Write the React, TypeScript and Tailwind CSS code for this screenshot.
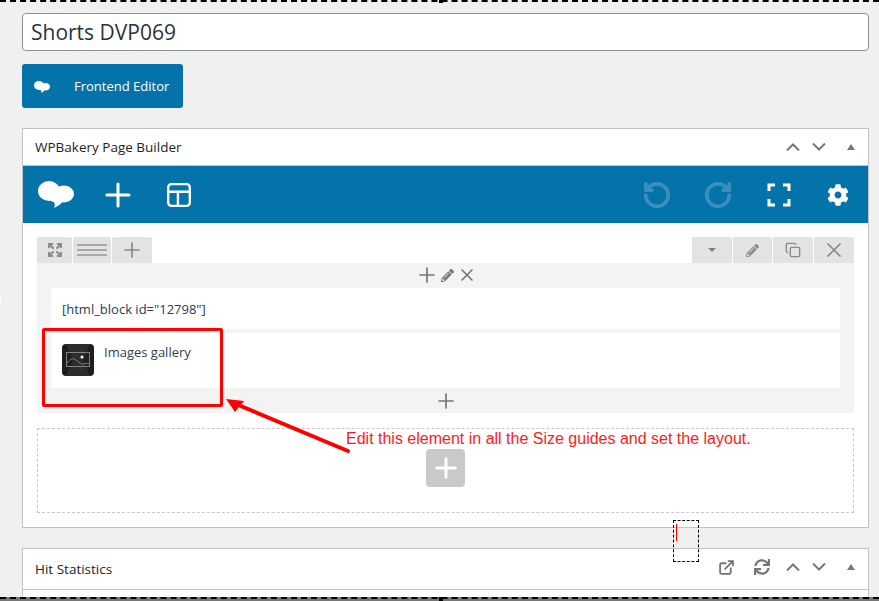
import { Plus, X, Copy, RotateCcw, RotateCw, ExternalLink, Expand } from "lucide-react";
import { FaCog, FaPencilAlt, FaSync } from "react-icons/fa";

const font = "font-['Open_Sans','Noto_Sans',sans-serif]";

function Cloud({ className }: { className: string }) {
  return (
    <svg viewBox="0 0 36 27" className={className} fill="currentColor">
      <ellipse cx="11" cy="10" rx="11" ry="10" />
      <ellipse cx="26" cy="13" rx="10" ry="8.500" />
      <path d="M12 16h14c0 4-3 8-10 11 1-2 1-4 0-6-2 0-4-1-4-5z" />
    </svg>
  );
}

function Arrow() {
  return (
    <svg className="absolute left-[224px] top-[396px] h-[60px] w-[130px]" viewBox="0 0 130 60">
      <line x1="124" y1="55" x2="12" y2="8" stroke="#ff0000" strokeWidth="4" strokeLinecap="round" />
      <polygon points="2,3 20,5 11,16" fill="#ff0000" />
    </svg>
  );
}

function Chevron({ up }: { up?: boolean }) {
  return (
    <svg viewBox="0 0 14 8" className="h-[8px] w-[14px]" fill="none" stroke="#72777c" strokeWidth="2">
      <path d={up ? "M1 7.500 7 1.500l6 6" : "M1 .5l6 6 6-6"} />
    </svg>
  );
}

function PanelControls() {
  return (
    <div className="flex items-center">
      <Chevron up />
      <span className="ml-[12px]">
        <Chevron />
      </span>
      <span className="ml-[21px] mr-[13px] h-0 w-0 border-x-[4px] border-b-[6px] border-x-transparent border-b-[#72777c]" />
    </div>
  );
}

function Tab({ w, children }: { w: string; children: React.ReactNode }) {
  return (
    <div className={`flex h-[26px] items-center justify-center rounded-t-[2px] bg-[#e3e3e3] text-[#8a8a8a] ${w}`}>
      {children}
    </div>
  );
}

export default function App() {
  return (
    <div className={`relative h-[601px] w-[879px] overflow-hidden bg-[#f0f0f0] ${font}`}>
      <div className="pl-[22px] pr-[10px] pt-[13px]">
        <div className="flex h-[38px] items-center rounded-[4px] border border-[#8c8f94] bg-white pl-[8px] pt-[2px] text-[21px] text-[#2c3338]">
          Shorts DVP069
        </div>

        <div className="mt-[13px] flex h-[44px] w-[161px] items-center rounded-[3px] bg-[#0473aa] pt-[1px] text-[13px] text-white">
          <Cloud className="ml-[12px] h-[12px] w-[16px]" />
          <span className="ml-[24px]">Frontend Editor</span>
        </div>

        <div className="mt-[20px] h-[400px] border border-[#c3c4c7] bg-white">
          <div className="flex h-[37px] items-center justify-between border-b border-[#c3c4c7]">
            <span className="pl-[12px] text-[13.500px] font-medium text-[#1d2327]">WPBakery Page Builder</span>
            <PanelControls />
          </div>

          <div className="flex h-[57px] items-center bg-[#0473aa] text-white">
            <Cloud className="ml-[15px] h-[27px] w-[36px]" />
            <Plus className="ml-[25px] h-[38px] w-[38px]" strokeWidth={1.900} />
            <svg className="ml-[29px] h-[26px] w-[26px]" viewBox="0 0 24 24" fill="none" stroke="currentColor" strokeWidth="2.200">
              <rect x="2" y="2" width="20" height="20" rx="3" />
              <path d="M2 9h20M11 9v13" />
            </svg>
            <RotateCcw className="ml-auto h-[30px] w-[30px] text-[#3a8fbb]" strokeWidth={3} />
            <RotateCw className="ml-[31px] h-[30px] w-[30px] text-[#3a8fbb]" strokeWidth={3} />
            <svg className="ml-[34px] h-[24px] w-[24px]" viewBox="0 0 24 24" fill="none" stroke="currentColor" strokeWidth="3">
              <path d="M2 8V2h6M16 2h6v6M22 16v6h-6M8 22H2v-6" />
            </svg>
            <FaCog className="ml-[36px] mr-[19px] h-[22px] w-[22px]" />
          </div>

          <div className="px-[14px] pt-[14px]">
            <div className="flex h-[26px] justify-between">
              <div className="flex gap-px">
                <Tab w="w-[35px]">
                  <Expand className="h-[16px] w-[16px]" strokeWidth={3} />
                </Tab>
                <Tab w="w-[38px]">
                  <div className="flex w-[30px] flex-col gap-[3px]">
                    <div className="h-[2px] bg-[#a8a8a8]" />
                    <div className="h-[2px] bg-[#a8a8a8]" />
                    <div className="h-[2px] bg-[#a8a8a8]" />
                  </div>
                </Tab>
                <Tab w="w-[40px]">
                  <Plus className="h-[24px] w-[24px]" strokeWidth={1.700} />
                </Tab>
              </div>
              <div className="flex gap-px">
                <Tab w="w-[40px]">
                  <span className="h-0 w-0 border-x-[4px] border-t-[4px] border-x-transparent border-t-[#808080]" />
                </Tab>
                <Tab w="w-[39px]">
                  <FaPencilAlt className="h-[13px] w-[13px]" />
                </Tab>
                <Tab w="w-[40px]">
                  <Copy className="h-[16px] w-[16px]" strokeWidth={2} />
                </Tab>
                <Tab w="w-[40px]">
                  <X className="h-[24px] w-[24px]" strokeWidth={1.700} />
                </Tab>
              </div>
            </div>

            <div className="h-[150px] bg-[#f3f3f3] px-[14px]">
              <div className="flex h-[24px] items-center justify-center text-[#777]">
                <Plus className="h-[24px] w-[24px]" strokeWidth={1.700} />
                <FaPencilAlt className="ml-[2px] h-[13px] w-[13px]" />
                <X className="ml-[3px] h-[20px] w-[20px]" strokeWidth={2} />
              </div>
              <div className="mt-px flex h-[41px] items-center bg-white pl-[11px] pt-[3px] text-[13px] text-[#23405a]">
                [html_block id="12798"]
              </div>
              <div className="mt-[4px] flex h-[55px] bg-white pl-[11px] pt-[11px]">
                <svg viewBox="0 0 32 32" className="h-[32px] w-[32px]" fill="none">
                  <rect width="32" height="32" rx="4" fill="#1e1e1e" />
                  <path d="M4 0h24l-7 16 7 16H4l7-16z" fill="#2d2d2d" />
                  <rect x="4.500" y="8.500" width="23" height="14" stroke="#808080" />
                  <path d="M5 19c4-5 6-5 9-3s5 5 8 4 4-1 5 0" stroke="#808080" />
                  <circle cx="20" cy="13" r="1.500" fill="#ffffff" />
                </svg>
                <span className="ml-[10px] text-[13px] leading-[16px] text-[#333f4d]">Images gallery</span>
              </div>
              <div className="flex h-[25px] items-center justify-center text-[#777]">
                <Plus className="h-[24px] w-[24px]" strokeWidth={1.700} />
              </div>
            </div>

            <div className="mt-[15px] flex h-[85px] justify-center border border-dashed border-[#c8c8c8] pt-[20px]">
              <div className="flex h-[38px] w-[39px] items-center justify-center rounded-[4px] bg-[#c9c9c9] text-white">
                <Plus className="h-[32px] w-[32px]" strokeWidth={2.200} />
              </div>
            </div>
          </div>
        </div>

        <div className="mt-[20px] h-[60px] border border-[#c3c4c7] bg-white">
          <div className="flex h-[41px] items-center justify-between border-b border-[#c3c4c7]">
            <span className="pl-[12px] text-[13.500px] font-medium text-[#1d2327]">Hit Statistics</span>
            <div className="flex -translate-y-[2px] items-center text-[#72777c]">
              <ExternalLink className="h-[17px] w-[17px]" strokeWidth={2.600} />
              <FaSync className="ml-[19px] h-[16px] w-[16px]" />
              <span className="ml-[16px]">
                <PanelControls />
              </span>
            </div>
          </div>
        </div>
      </div>

      {/* annotations drawn over the page */}
      <div className="absolute left-[42px] top-[328px] h-[79px] w-[181px] rounded-[2px] border-[3px] border-[#ff0000]" />
      <Arrow />
      <div className="absolute left-[346px] top-[430px] font-['Liberation_Sans',sans-serif] text-[16px] leading-[18px] text-[#ff1a1a]">
        Edit this element in all the Size guides and set the layout.
      </div>
      <div className="absolute left-[673px] top-[520px] h-[42px] w-[26px] border border-dashed border-black">
        <div className="ml-[2px] mt-[3px] h-[17px] w-px bg-[#ff0000]" />
      </div>
      <div className="absolute inset-x-0 top-0 border-t-2 border-dashed border-black" />
      <div className="absolute left-[439px] top-0 h-[3px] w-[4px] bg-black" />
      <div className="absolute left-0 top-[297px] h-[6px] w-px bg-white" />
      <div className="absolute inset-x-0 bottom-0 h-[4px] border-t-2 border-dashed border-black bg-[#777]" />
      <div className="absolute bottom-0 left-[439px] h-[4px] w-[4px] bg-black" />
    </div>
  );
}
